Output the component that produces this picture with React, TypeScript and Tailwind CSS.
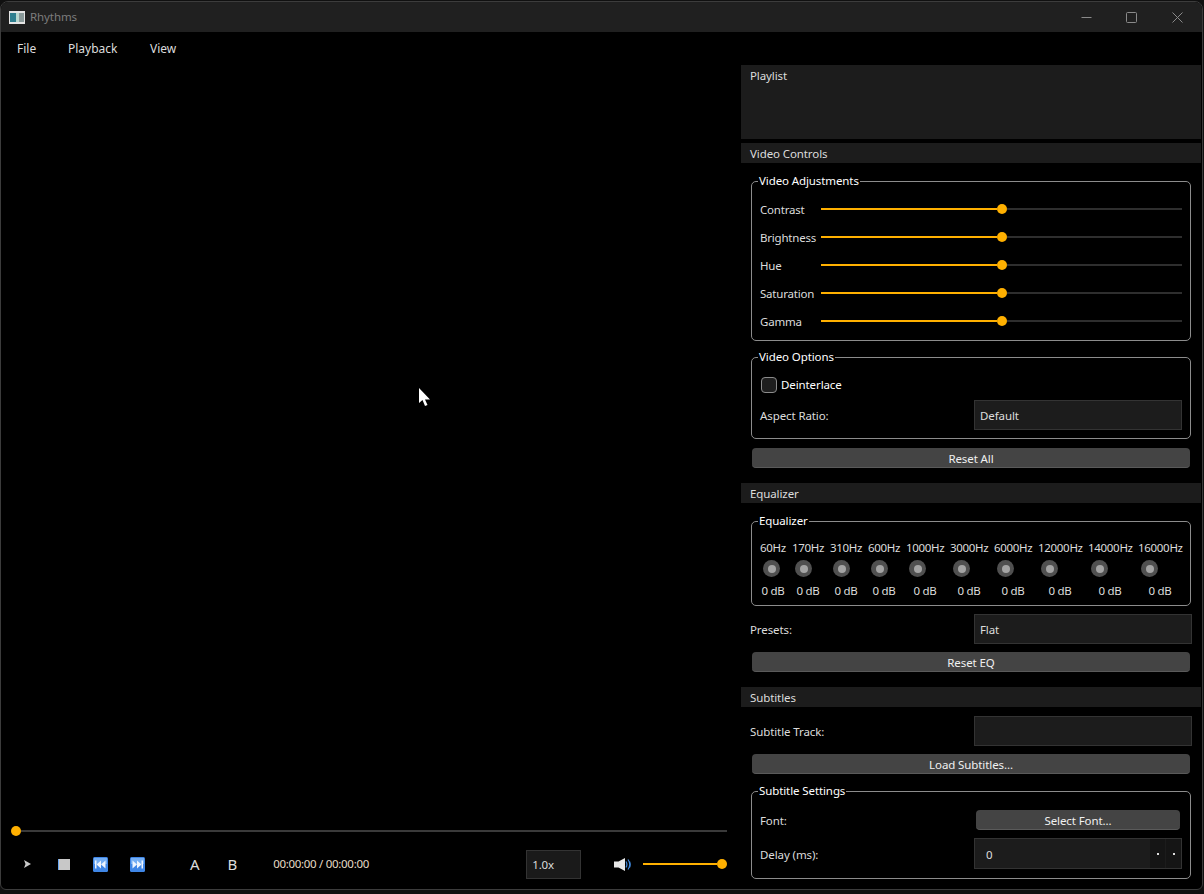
import type { ReactNode } from 'react'

const bands = [
  { hz: '60Hz', w: 'w-[26px]' },
  { hz: '170Hz', w: 'w-[32px]' },
  { hz: '310Hz', w: 'w-[32px]' },
  { hz: '600Hz', w: 'w-[32px]' },
  { hz: '1000Hz', w: 'w-[38px]' },
  { hz: '3000Hz', w: 'w-[38px]' },
  { hz: '6000Hz', w: 'w-[38px]' },
  { hz: '12000Hz', w: 'w-[44px]' },
  { hz: '14000Hz', w: 'w-[44px]' },
  { hz: '16000Hz', w: 'w-[44px]' },
]

function Handle() {
  return <div className="w-[10px] h-[10px] rounded-full bg-[#ffb000] shrink-0" />
}

function Slider() {
  return (
    <div className="flex-1 flex items-center">
      <div className="flex-1 h-[2px] bg-[#ffb000]" />
      <Handle />
      <div className="flex-1 h-[2px] bg-[#2e2e2e]" />
    </div>
  )
}

function Group({ title, className, children }: { title: string; className: string; children: ReactNode }) {
  return (
    <fieldset className={`border border-[#8c8c8c] rounded-[5px] ${className}`}>
      <legend className="-ml-[2px] pl-px pr-px text-white leading-[16px]">{title}</legend>
      {children}
    </fieldset>
  )
}

function Header({ title, className }: { title: string; className: string }) {
  return <div className={`h-5 bg-[#1c1c1c] pl-[9px] leading-[22px] text-[#dcdcdc] ${className}`}>{title}</div>
}

function Combo({ text, className }: { text?: string; className: string }) {
  return (
    <div className={`h-[30px] bg-[#1c1c1c] border border-[#333] pl-[5px] leading-[30px] text-[#dcdcdc] ${className}`}>
      {text}
    </div>
  )
}

function Button({ text, className }: { text: string; className: string }) {
  return (
    <div className={`h-5 rounded-[4px] bg-[#444] border-b border-[#5a5a5a] text-center leading-[22px] text-[#f0f0f0] ${className}`}>
      {text}
    </div>
  )
}

function SkipIcon({ flip }: { flip?: boolean }) {
  return (
    <svg width="15" height="15" viewBox="0 0 15 15" className={flip ? '-scale-x-100' : ''}>
      <rect x="0" y="0" width="15" height="15" rx="1.5" fill="#3f86e6" />
      <rect x="1" y="1" width="13" height="6" fill="#74aef4" />
      <path d="M2.5 3.5l4.5 4-4.5 4zM7 3.5l4.5 4-4.5 4z" fill="#eef5ff" />
      <rect x="11.5" y="3.5" width="1.5" height="8" fill="#eef5ff" />
    </svg>
  )
}

export default function App() {
  return (
    <div className="relative w-[1204px] h-[894px] bg-[#101010] pt-px text-[11.5px] tracking-[-0.1px] overflow-hidden font-['Noto_Sans','Open_Sans',sans-serif]">
      <div className="w-[1203px] h-[889px] border border-[#3c3c3c] rounded-t-[8px] rounded-b-[6px] bg-black flex flex-col overflow-hidden">
        {/* title bar */}
        <div className="h-[30px] bg-[#202020] flex items-center shrink-0">
          <svg width="16" height="13" viewBox="0 0 16 13" className="ml-[8px]">
            <rect width="16" height="13" fill="#e4e4e4" />
            <rect x="1" y="2" width="6" height="9" fill="#2f7f8f" />
            <rect x="7" y="2" width="3" height="9" fill="#b8d8d0" />
            <rect x="10" y="2" width="5" height="9" fill="#8a9a9a" />
          </svg>
          <span className="ml-[5px] text-[#7c7c7c]">Rhythms</span>
          <div className="ml-auto flex items-center">
            <svg width="11" height="11" viewBox="0 0 11 11" className="mr-[34px]">
              <path d="M0.5 5.5h10" stroke="#8a8a8a" fill="none" />
            </svg>
            <svg width="11" height="11" viewBox="0 0 11 11" className="mr-[35px]">
              <rect x="0.5" y="0.5" width="10" height="10" rx="1" stroke="#8a8a8a" fill="none" />
            </svg>
            <svg width="11" height="11" viewBox="0 0 11 11" className="mr-[19px]">
              <path d="M0.5 0.5l10 10M10.5 0.5l-10 10" stroke="#8a8a8a" fill="none" />
            </svg>
          </div>
        </div>
        {/* menu */}
        <div className="h-[33px] flex items-center shrink-0 text-[12px] tracking-normal text-[#dcdcdc] pl-[16px]">
          <span className="w-[51px]">File</span>
          <span className="w-[82px]">Playback</span>
          <span>View</span>
        </div>
        <div className="flex-1 flex min-h-0">
          {/* video area */}
          <div className="w-[740px] flex flex-col justify-end text-[#dcdcdc]">
            <div className="ml-[10px] mr-[14px] flex items-center">
              <Handle />
              <div className="flex-1 h-[2px] bg-[#3a3a3a]" />
            </div>
            <div className="h-[30px] mt-[13px] mb-[10px] flex items-center">
              <svg width="8" height="8" viewBox="0 0 8 8" className="ml-[23px]">
                <path d="M0 0l7 4-7 4 1.5-4z" fill="#c8c8c8" />
              </svg>
              <div className="ml-[26px] w-[12px] h-[11px] bg-[#c8c8c8] border-l border-[#6aa8f2]" />
              <div className="ml-[23px]"><SkipIcon flip /></div>
              <div className="ml-[22px]"><SkipIcon /></div>
              <span className="ml-[45px] text-[15px] leading-none">A</span>
              <span className="ml-[28px] text-[15px] leading-none">B</span>
              <span className="ml-[36px] w-[253px] tracking-[-0.3px] text-[#e6dcc6]">00:00:00 / 00:00:00</span>
              <div className="w-[55px] h-[29px] bg-[#1a1a1a] border border-[#333] pl-[5px] leading-[28px]">1.0x</div>
              <svg width="18" height="15" viewBox="0 0 18 15" className="ml-[33px]">
                <path d="M0 4.5h4.5L11 1v13L4.5 10.500H0z" fill="#e8e8e8" />
                <path d="M12 4.500q1.800 3 0 6M14 2.500q3.500 5 0 10M15.500 4.500q1.500 3 0 6" stroke="#3f88dc" strokeWidth="1.200" fill="none" />
              </svg>
              <div className="ml-[11px] w-[84px] flex items-center">
                <div className="flex-1 h-[2px] bg-[#ffb000]" />
                <Handle />
              </div>
            </div>
          </div>
          {/* side panel */}
          <div className="w-[460px] pt-0 text-[#dcdcdc]">
            <div className="h-[74px] bg-[#1c1c1c] pl-[9px] pt-[2px] leading-[18px]">Playlist</div>
            <Header title="Video Controls" className="mt-[4px]" />
            <Group title="Video Adjustments" className="mt-[10px] ml-[10px] mr-[10px] h-[168px] px-[8px]">
              <div className="flex flex-col gap-[8px] pt-[10px]">
                {['Contrast', 'Brightness', 'Hue', 'Saturation', 'Gamma'].map(name => (
                  <div key={name} className="h-5 flex items-center">
                    <span className="w-[61px] mt-[2px] tracking-[-0.2px]">{name}</span>
                    <Slider />
                  </div>
                ))}
              </div>
            </Group>
            <Group title="Video Options" className="mt-[8px] ml-[10px] mr-[10px] h-[90px] px-[8px]">
              <div className="h-[20px] mt-[10px] flex items-center">
                <div className="ml-[1px] w-[16px] h-[16px] rounded-[4px] bg-[#1e1e1e] border border-[#8c8c8c]" />
                <span className="ml-[4px] text-white">Deinterlace</span>
              </div>
              <div className="mt-[5px] flex items-center justify-between">
                <span className="mt-[2px]">Aspect Ratio:</span>
                <Combo text="Default" className="w-[208px]" />
              </div>
            </Group>
            <Button text="Reset All" className="mt-[9px] ml-[11px] mr-[11px]" />
            <Header title="Equalizer" className="mt-[15px]" />
            <Group title="Equalizer" className="mt-[10px] ml-[10px] mr-[10px] h-[93px] px-[8px]">
              <div className="flex gap-[6px] pt-[11px]">
                {bands.map(b => (
                  <div key={b.hz} className={`${b.w} flex flex-col`}>
                    <span className="text-center leading-[16px] whitespace-nowrap tracking-[-0.3px]">{b.hz}</span>
                    <div className="mt-[4px] ml-[3px] w-[17px] h-[17px] rounded-full bg-[#505050] flex items-center justify-center">
                      <div className="w-[8px] h-[8px] rounded-full bg-[#a4a4a4]" />
                    </div>
                    <span className="mt-[6px] text-center leading-[16px] whitespace-nowrap tracking-[-0.3px]">0 dB</span>
                  </div>
                ))}
              </div>
            </Group>
            <div className="mt-[8px] pl-[9px] pr-[9px] flex items-center justify-between">
              <span className="mt-[2px]">Presets:</span>
              <Combo text="Flat" className="w-[218px]" />
            </div>
            <Button text="Reset EQ" className="mt-[8px] ml-[11px] mr-[11px]" />
            <Header title="Subtitles" className="mt-[15px]" />
            <div className="mt-[9px] pl-[9px] pr-[9px] flex items-center justify-between">
              <span className="mt-[2px]">Subtitle Track:</span>
              <Combo className="w-[218px]" />
            </div>
            <Button text="Load Subtitles..." className="mt-[8px] ml-[11px] mr-[11px]" />
            <Group title="Subtitle Settings" className="mt-[9px] ml-[10px] mr-[10px] h-[96px] px-[8px]">
              <div className="mt-[11px] flex items-center justify-between pr-[2px]">
                <span className="mt-[2px]">Font:</span>
                <Button text="Select Font..." className="w-[204px]" />
              </div>
              <div className="mt-[8px] flex items-center justify-between">
                <span className="mt-[2px]">Delay (ms):</span>
                <div className="w-[208px] h-[31px] bg-[#1c1c1c] border border-[#333] flex items-center pl-[11px]">
                  <span className="flex-1 mt-[2px]">0</span>
                  <div className="w-[15px] h-full bg-[#151515] flex items-center justify-center">
                    <div className="w-[2px] h-[2px] bg-[#ddd]" />
                  </div>
                  <div className="ml-[1px] w-[15px] h-full bg-[#151515] flex items-center justify-center">
                    <div className="w-[2px] h-[2px] bg-[#ddd]" />
                  </div>
                </div>
              </div>
            </Group>
          </div>
        </div>
      </div>
      {/* mouse pointer */}
      <svg width="12" height="19" viewBox="0 0 12 19" className="absolute left-[419px] top-[388px]">
        <path d="M0 0v15l3.5-3 2.500 6 2.500-1-2.500-5.500H11z" fill="#fff" />
      </svg>
    </div>
  )
}
